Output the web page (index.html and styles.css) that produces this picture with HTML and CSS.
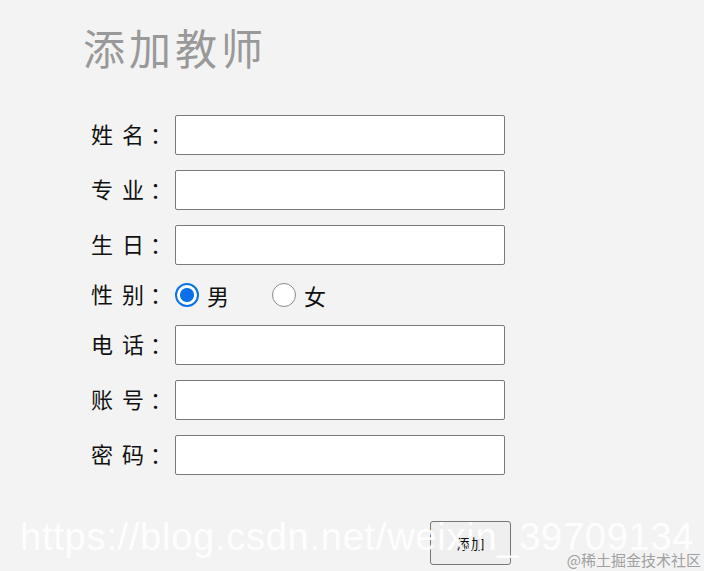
FILE: index.html
```html
<!DOCTYPE html>
<html lang="zh">
<head>
<meta charset="utf-8">
<link rel="stylesheet" href="styles.css">
</head>
<body>
<div class="page">
  <h1 class="title">添加教师</h1>
  <form class="form">
    <div class="row"><label class="label">姓 名<span class="colon">：</span></label><input class="field" type="text"></div>
    <div class="row"><label class="label">专 业<span class="colon">：</span></label><input class="field" type="text"></div>
    <div class="row"><label class="label">生 日<span class="colon">：</span></label><input class="field" type="text"></div>
    <div class="row radio-row"><label class="label">性 别<span class="colon">：</span></label>
      <span class="opt"><span class="radio checked"></span><span class="opt-text">男</span></span>
      <span class="opt"><span class="radio"></span><span class="opt-text">女</span></span>
    </div>
    <div class="row"><label class="label">电 话<span class="colon">：</span></label><input class="field" type="text"></div>
    <div class="row"><label class="label">账 号<span class="colon">：</span></label><input class="field" type="text"></div>
    <div class="row"><label class="label">密 码<span class="colon">：</span></label><input class="field" type="password"></div>
    <div class="actions"><button class="btn" type="button">添加</button></div>
  </form>
  <div class="watermark">https://blog.csdn.net/weixin_39709134</div>
  <div class="credit">@稀土掘金技术社区</div>
</div>
</body>
</html>
```

FILE: styles.css
```css
html, body {
  margin: 0;
  padding: 0;
  background: #f3f3f3;
}
.page {
  position: relative;
  width: 704px;
  height: 571px;
  overflow: hidden;
  font-family: "Noto Sans CJK SC", "Noto Sans", sans-serif;
}
.title {
  margin: 0;
  padding: 26px 0 0 83px;
  font-size: 42px;
  font-weight: 400;
  line-height: 42px;
  color: #999;
  letter-spacing: 4px;
}
.form {
  display: flex;
  flex-direction: column;
  gap: 15px;
  padding: 47px 0 0 91px;
}
.row {
  display: flex;
  align-items: center;
  height: 40px;
}
.label {
  width: 84px;
  padding-bottom: 4px;
  font-size: 22px;
  color: #111;
  letter-spacing: 2px;
  white-space: pre;
}
.colon {
  margin-left: 4px;
}
.field {
  box-sizing: border-box;
  width: 330px;
  height: 40px;
  margin: 0;
  border: 1px solid #7a7a7a;
  border-radius: 2px;
  background: #fff;
}
.radio-row {
  height: 30px;
}
.opt {
  display: flex;
  align-items: center;
  margin-right: 43px;
}
.radio {
  box-sizing: border-box;
  width: 24px;
  height: 24px;
  border-radius: 50%;
  border: 1px solid #8a8a8a;
  background: #fff;
}
.radio.checked {
  border: 2px solid #0a72e6;
  background: radial-gradient(circle, #0a72e6 0 6.5px, #fff 7.5px);
}
.opt-text {
  margin-left: 8px;
  font-size: 22px;
  color: #111;
}
.actions {
  display: flex;
  padding: 31px 0 0 339px;
}
.btn {
  box-sizing: border-box;
  width: 81px;
  height: 44px;
  border: 1px solid #767676;
  border-radius: 3px;
  background: #efefef;
  font-family: "Noto Sans CJK SC", sans-serif;
  font-size: 14px;
  color: #111;
}
.watermark {
  position: absolute;
  left: 20px;
  top: 512px;
  font-family: "Liberation Sans", Arial, sans-serif;
  font-size: 38px;
  line-height: 50px;
  color: rgba(255,255,255,0.88);
  white-space: nowrap;
  letter-spacing: 0.75px;
}
.credit {
  position: absolute;
  right: 3px;
  top: 550px;
  font-size: 15px;
  line-height: 20px;
  color: #a0a0a0;
}
```
